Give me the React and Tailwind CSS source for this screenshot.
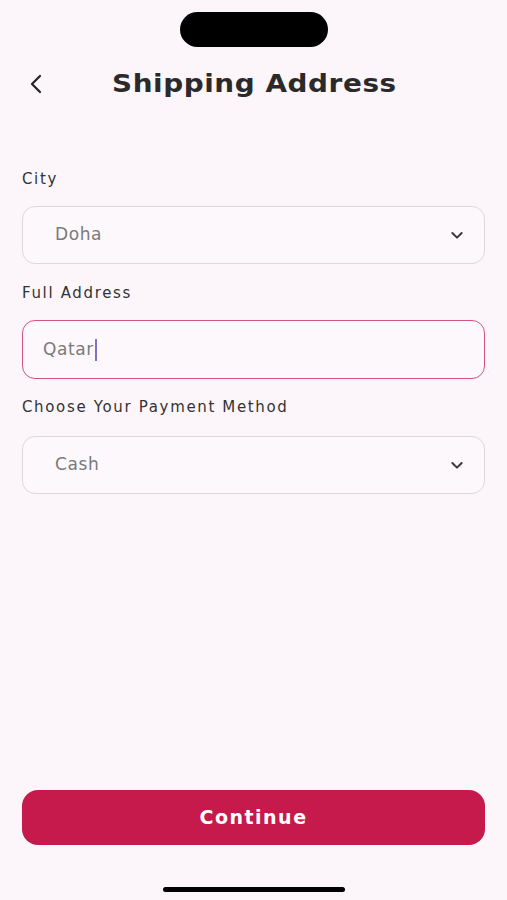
import React, { useState } from "react";

const display = { fontFamily: '"DejaVu Sans", "Liberation Sans", sans-serif' };

const Chevron = () => (
  <svg width="16" height="16" viewBox="0 0 24 24" fill="none" stroke="#3a3a3a" strokeWidth="3" strokeLinecap="round" strokeLinejoin="round">
    <path d="M5 9l7 7 7-7" />
  </svg>
);

const SelectField = ({ value }) => (
  <div className="flex h-[58px] items-center justify-between rounded-[13px] border border-[#dcd8dc] bg-[#fdf8fc] pl-[32px] pr-[19px]">
    <span className="text-[17px] tracking-[0.6px] text-[#7a7a7a]">{value}</span>
    <Chevron />
  </div>
);

const Label = ({ children }) => (
  <div className="text-[15px] tracking-[1.65px] text-[#333]">{children}</div>
);

const App = () => {
  const [address] = useState("Qatar");

  return (
    <div className="flex h-[900px] w-[507px] flex-col bg-[#fcf6fb]" style={display}>
      {/* status bar */}
      <div className="flex h-[60px] justify-center pt-[12px]">
        <div className="h-[35px] w-[148px] rounded-full bg-black" />
      </div>

      {/* header */}
      <div className="flex h-[48px] items-center px-[26px]">
        <svg width="20" height="22" viewBox="0 0 20 22" fill="none" stroke="#222" strokeWidth="2.2" strokeLinecap="round" strokeLinejoin="round">
          <path d="M14 3L6 11l8 8" />
        </svg>
        <h1 className="ml-[66px] origin-left scale-x-[1.16] text-[24px] font-bold tracking-[0.5px] text-[#2a2a2a]">
          Shipping Address
        </h1>
      </div>

      {/* form */}
      <div className="mt-[60px] flex flex-col px-[22px]">
        <Label>City</Label>
        <div className="mt-[15px]">
          <SelectField value="Doha" />
        </div>

        <div className="mt-[18px]">
          <Label>Full Address</Label>
        </div>
        <div className="mt-[16px] flex h-[59px] items-center rounded-[13px] border-[1.5px] border-[#d2557e] bg-[#fdf8fc] pl-[20px]">
          <span className="text-[17px] tracking-[0.6px] text-[#7a7a7a]">{address}</span>
          <span className="ml-[1px] h-[22px] w-[2px] bg-[#7b74c8]" />
        </div>

        <div className="mt-[17px]">
          <Label>Choose Your Payment Method</Label>
        </div>
        <div className="mt-[17px]">
          <SelectField value="Cash" />
        </div>
      </div>

      <div className="flex-1" />

      {/* continue */}
      <div className="px-[22px]">
        <button className="flex h-[55px] w-full items-center justify-center rounded-[16px] bg-[#c51a4b] text-[19px] font-bold tracking-[1.5px] text-white">
          Continue
        </button>
      </div>

      <div className="flex h-[55px] items-end justify-center pb-[8px]">
        <div className="h-[5px] w-[182px] rounded-full bg-black" />
      </div>
    </div>
  );
};

export default App;
